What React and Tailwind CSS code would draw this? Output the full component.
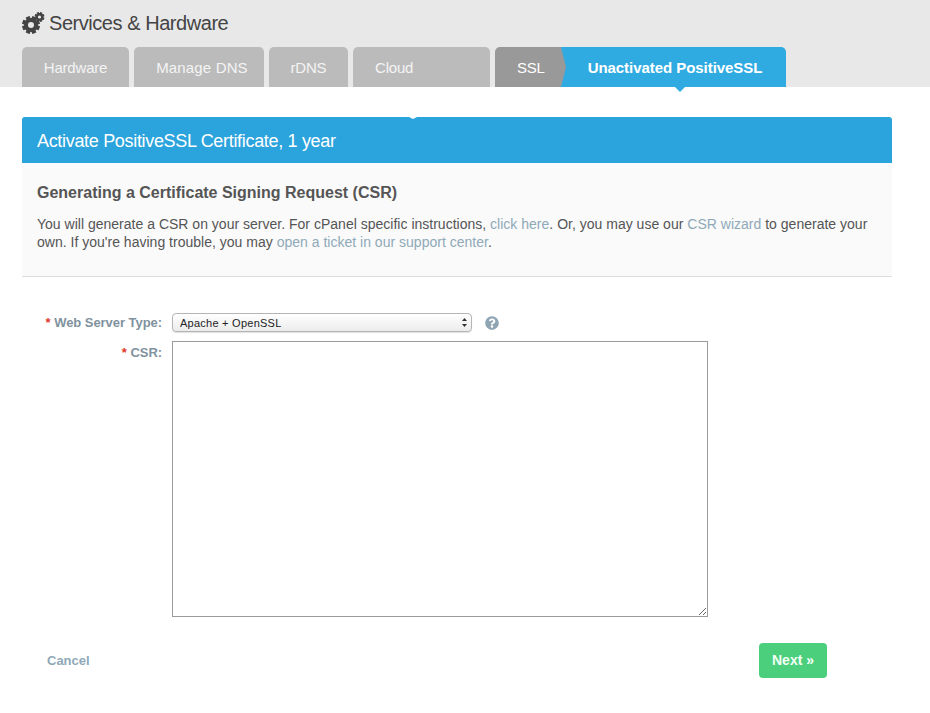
import React from "react";
import { FaQuestionCircle } from "react-icons/fa";

const font = "font-['Liberation_Sans',Arial,sans-serif]";

function Gear({ cx, cy, r, hole, teeth }) {
  const ticks = [];
  for (let i = 0; i < teeth; i++) {
    const a = (360 / teeth) * i + 22.5;
    ticks.push(
      <rect key={i} x={cx - r * 0.24} y={cy - r} width={r * 0.48} height={r * 0.5} rx="0.3" transform={`rotate(${a} ${cx} ${cy})`} />
    );
  }
  return (
    <g fill="#444444">
      {ticks}
      <circle cx={cx} cy={cy} r={(r * 0.78 + hole) / 2} fill="none" stroke="#444444" strokeWidth={r * 0.78 - hole} />
    </g>
  );
}

function CogsIcon() {
  return (
    <svg width="23" height="22" viewBox="0 0 23 22" className="shrink-0">
      <Gear cx={9} cy={13} r={9} hole={3} teeth={8} />
      <Gear cx={17.5} cy={5} r={5} hole={1.6} teeth={8} />
    </svg>
  );
}

function Tab({ label, className }) {
  return (
    <div className={`flex h-10 items-center justify-center rounded-t-[5px] bg-[#bbbbbb] pt-[2px] text-[15px] text-[#f4f4f4] ${className}`}>
      {label}
    </div>
  );
}

export default function App() {
  return (
    <div className={`relative h-[713px] w-[930px] overflow-hidden bg-white ${font}`}>
      <header className="h-[87px] bg-[#e8e8e8] px-[22px]">
        <div className="flex h-[47px] items-center pb-[1px]">
          <CogsIcon />
          <h1 className="ml-[4px] text-[20px] font-normal tracking-[-0.45px] text-[#444444]">Services &amp; Hardware</h1>
        </div>
        <nav className="flex gap-[5px]">
          <Tab label="Hardware" className="w-[107px] tracking-[-0.2px]" />
          <Tab label="Manage DNS" className="w-[130px] pl-[6px] tracking-[0.15px]" />
          <Tab label="rDNS" className="w-[79px] tracking-[-0.2px]" />
          <Tab label="Cloud" className="w-[137px] justify-start pl-[22px] tracking-[-0.2px]" />
          <div className="flex">
            <div className="relative z-10 flex h-10 w-[66px] items-center rounded-tl-[5px] bg-[#999999] pl-[22px] pt-[2px] text-[15px] tracking-[-0.2px] text-white">
              SSL
              <svg className="absolute left-full top-0" width="5" height="40" viewBox="0 0 5 40">
                <polygon points="0,0 5,20 0,40" fill="#999999" />
              </svg>
            </div>
            <div className="relative flex h-10 w-[225px] items-center justify-center rounded-tr-[5px] bg-[#2fabe1] pl-[3px] pt-[2px] text-[15px] font-bold tracking-[-0.05px] text-white">
              Unactivated PositiveSSL
              <svg className="absolute left-[114px] top-full" width="10" height="5" viewBox="0 0 10 5">
                <polygon points="0,0 10,0 5,5" fill="#2fabe1" />
              </svg>
            </div>
          </div>
        </nav>
      </header>

      <main className="px-[22px] pt-[30px]">
        <section className="relative w-[870px]">
          <svg className="absolute left-[386px] top-0" width="10" height="2" viewBox="0 0 10 2">
            <polygon points="1,0 9,0 5,2" fill="#ffffff" />
          </svg>
          <div className="flex h-[46px] items-center rounded-t-[3px] bg-[#2ba3dc] px-[15px] pt-[2px] text-[18px] tracking-[-0.32px] text-white">
            Activate PositiveSSL Certificate, 1 year
          </div>
          <div className="h-[114px] border-b border-[#dddddd] bg-[#fafafa] px-[15px] pt-[20px]">
            <h2 className="text-[16px] font-bold leading-[20px] text-[#555555]">
              Generating a Certificate Signing Request (CSR)
            </h2>
            <p className="mt-[12px] w-[840px] text-[14px] leading-[18px] tracking-[0.01px] text-[#555555]">
              You will generate a CSR on your server. For cPanel specific instructions, <a className="text-[#8fa9b8]">click here</a>. Or, you may use our <a className="text-[#8fa9b8]">CSR wizard</a> to generate your own. If you're having trouble, you may <a className="text-[#8fa9b8]">open a ticket in our support center</a>.
            </p>
          </div>
        </section>

        <form className="mt-[36px]">
          <div className="flex items-center">
            <label className="w-[140px] text-right text-[13px] font-bold tracking-[-0.05px] text-[#7f929e]">
              <span className="text-[#e0392b]">*</span> Web Server Type:
            </label>
            <div className="relative ml-[10px] h-[19px] w-[300px]">
              <select className="block h-full w-full appearance-none rounded-[4px] border border-[#b5b5b5] bg-gradient-to-b from-white to-[#ececec] pl-[7px] font-['Liberation_Sans',Arial,sans-serif] text-[11px] tracking-[0.25px] text-[#222222] shadow-[0_1px_1px_rgba(0,0,0,0.12)]">
                <option>Apache + OpenSSL</option>
              </select>
              <svg className="pointer-events-none absolute right-[5px] top-[5px]" width="5" height="9" viewBox="0 0 5 9">
                <polygon points="2.5,0 5,3 0,3" fill="#333333" />
                <polygon points="0,6 5,6 2.5,9" fill="#333333" />
              </svg>
            </div>
            <FaQuestionCircle className="ml-[13px] h-[14px] w-[14px] text-[#8fa5b3]" />
          </div>

          <div className="mt-[8px] flex items-start">
            <label className="w-[140px] pt-[2px] text-right text-[13px] font-bold tracking-[-0.05px] text-[#7f929e]">
              <span className="text-[#e0392b]">*</span> CSR:
            </label>
            <textarea className="ml-[10px] block h-[276px] w-[536px] border border-[#9a9a9a] bg-white" />
          </div>

          <div className="mt-[26px] flex items-center justify-between pl-[25px] pr-[81px]">
            <a className="pt-[2px] text-[13px] font-bold text-[#8fa9b8]">Cancel</a>
            <button type="button" className="h-[35px] w-[68px] rounded-[4px] bg-[#4ccf7c] text-[14px] font-bold text-[#f2fff6]">
              Next »
            </button>
          </div>
        </form>
      </main>
    </div>
  );
}
